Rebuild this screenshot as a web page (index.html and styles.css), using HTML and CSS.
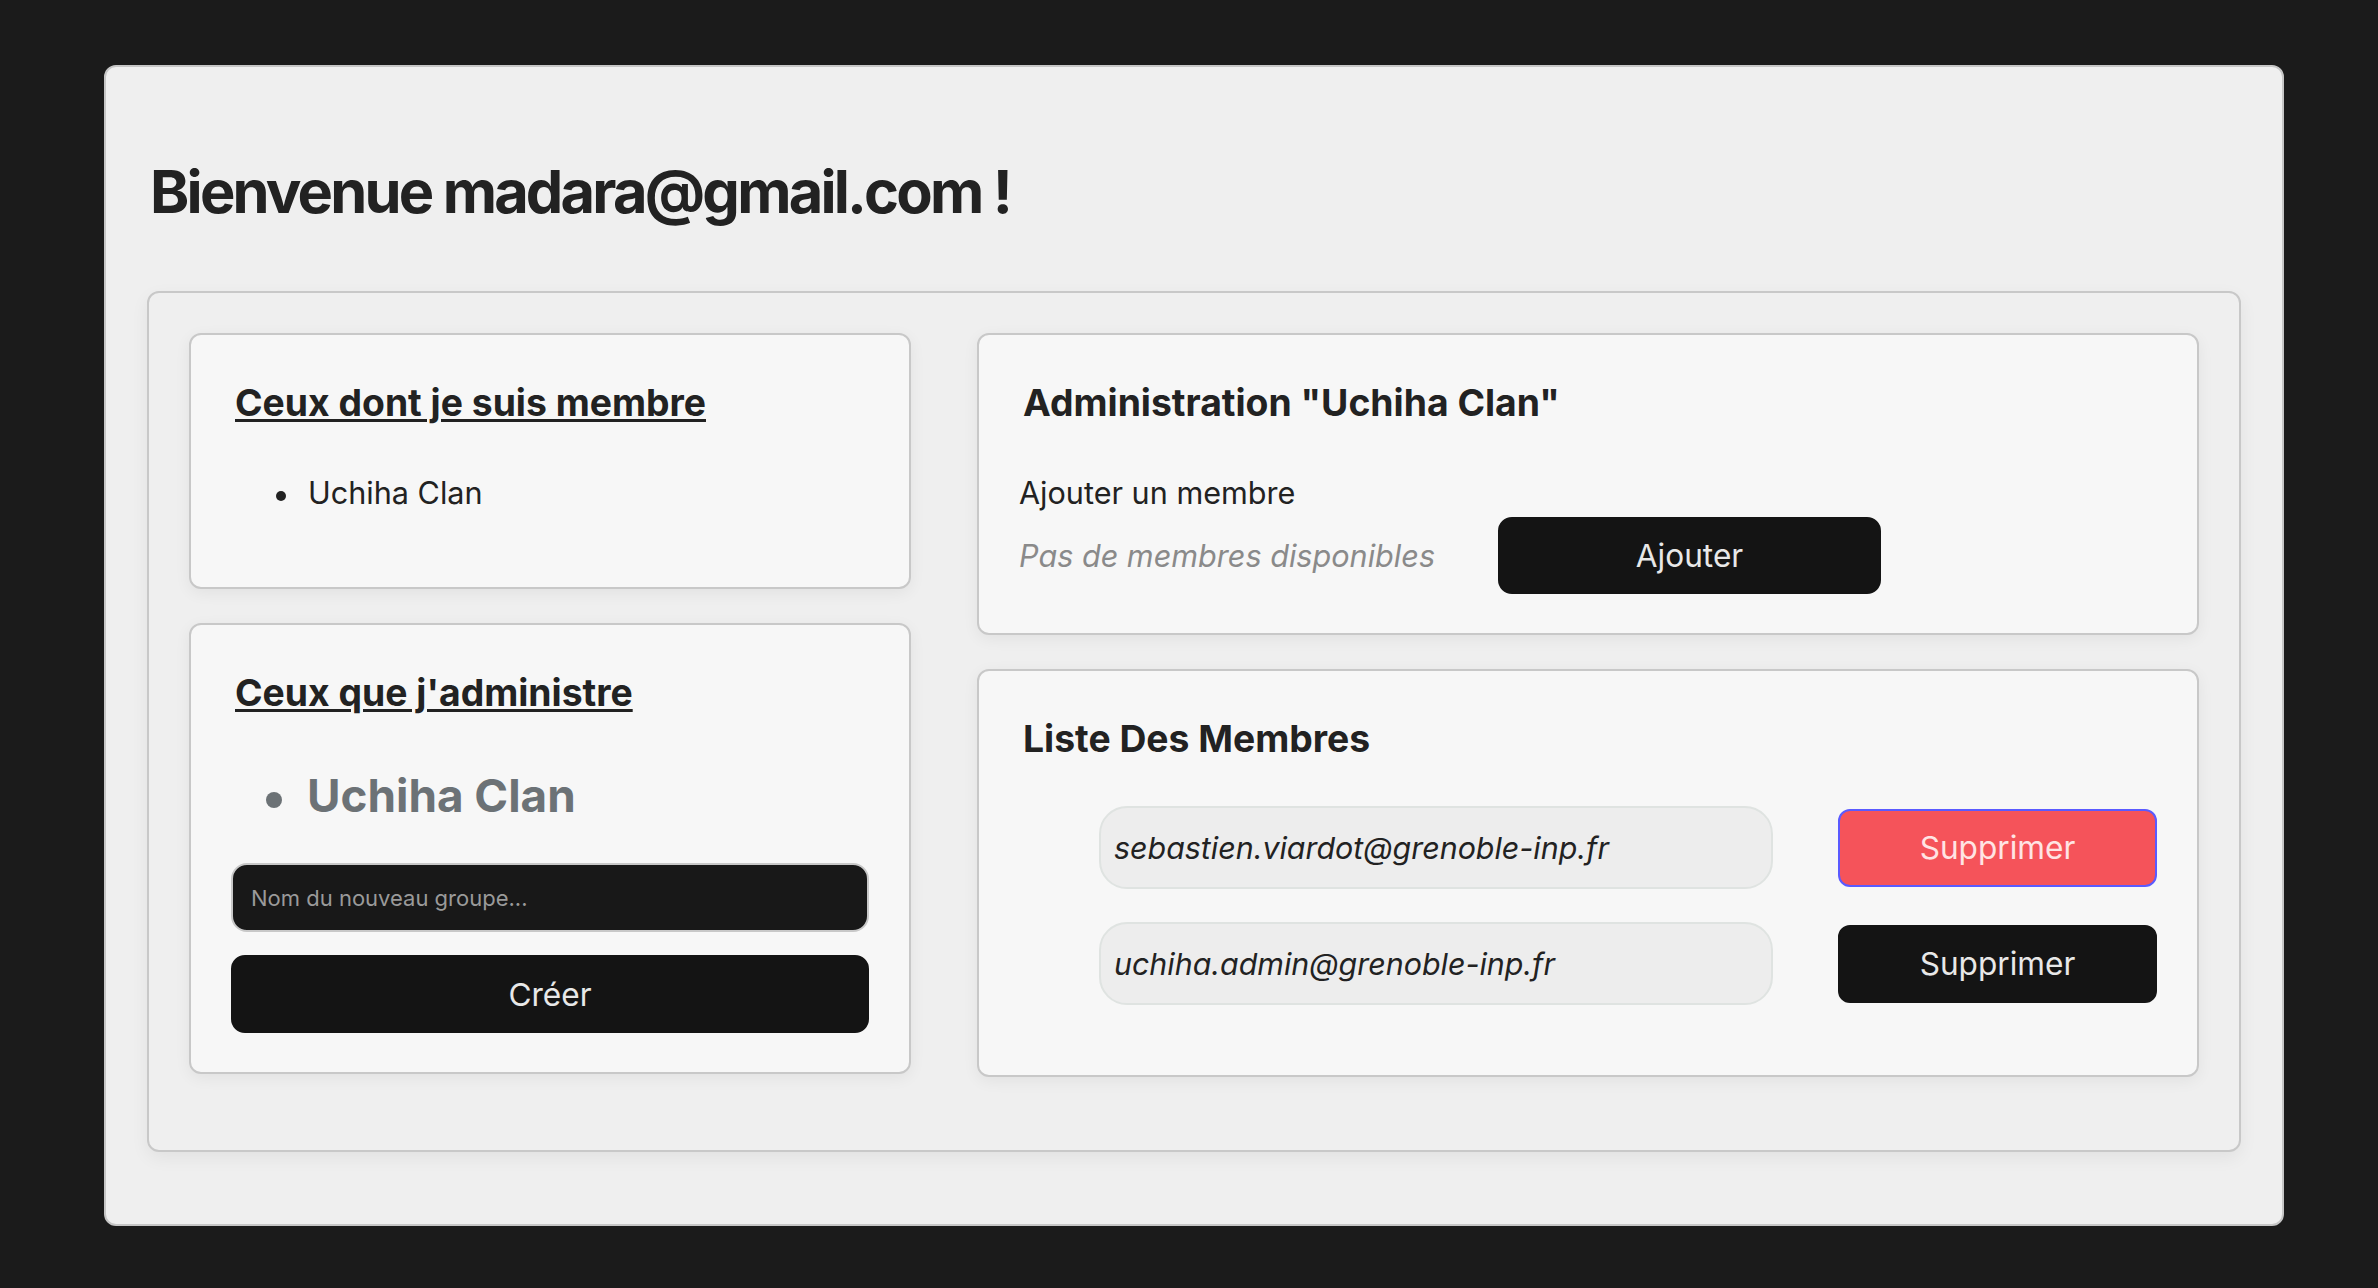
FILE: index.html
```html
<!DOCTYPE html>
<html lang="fr">
<head>
<meta charset="utf-8">
<title>Bienvenue</title>
<link rel="stylesheet" href="styles.css">
</head>
<body>
<main class="page">
  <h1 class="welcome">Bienvenue madara@gmail.com !</h1>
  <section class="board">
    <div class="col">
      <div class="card">
        <h3 class="card-title"><span class="underlined">Ceux dont je suis membre</span></h3>
        <ul class="groups">
          <li>Uchiha Clan</li>
        </ul>
      </div>
      <div class="card card-admin">
        <h3 class="card-title"><span class="underlined">Ceux que j'administre</span></h3>
        <ul class="groups groups-big">
          <li>Uchiha Clan</li>
        </ul>
        <input class="group-input" type="text" placeholder="Nom du nouveau groupe...">
        <button class="btn btn-create">Créer</button>
      </div>
    </div>
    <div class="col">
      <div class="card card-manage">
        <h3 class="card-title">Administration "Uchiha Clan"</h3>
        <p class="label">Ajouter un membre</p>
        <div class="add-row">
          <span class="empty">Pas de membres disponibles</span>
          <button class="btn btn-add">Ajouter</button>
        </div>
      </div>
      <div class="card card-members">
        <h3 class="card-title">Liste Des Membres</h3>
        <ul class="members">
          <li class="member">
            <span class="pill">sebastien.viardot@grenoble-inp.fr</span>
            <button class="btn btn-del btn-danger">Supprimer</button>
          </li>
          <li class="member">
            <span class="pill">uchiha.admin@grenoble-inp.fr</span>
            <button class="btn btn-del">Supprimer</button>
          </li>
        </ul>
      </div>
    </div>
  </section>
</main>
</body>
</html>
```

FILE: styles.css
```css
* { box-sizing: border-box; }

html, body {
  margin: 0;
  padding: 0;
  background: #1b1b1b;
}

body {
  font-family: Inter, "Noto Sans", "Liberation Sans", sans-serif;
  color: #222222;
  padding: 65px 0 0 104px;
  height: 1288px;
  overflow: hidden;
}

.page {
  width: 2180px;
  height: 1161px;
  background: #efefef;
  border: 2px solid #c6c6c6;
  border-radius: 12px;
  padding: 88px 41px 0 41px;
}

.welcome {
  margin: 0 0 64px 0;
  padding-left: 3px;
  font-size: 59.5px;
  line-height: 72px;
  font-weight: 700;
  color: #222222;
  letter-spacing: -2.8px;
}

.board {
  display: grid;
  grid-template-columns: 722px 1222px;
  column-gap: 66px;
  align-items: start;
  border: 2px solid #c8c8c8;
  border-radius: 12px;
  padding: 40px 40px 39px 40px;
  background: #efefef;
  box-shadow: 0 6px 18px rgba(0, 0, 0, 0.06);
}

.col {
  display: flex;
  flex-direction: column;
}

.card {
  background: #f7f7f7;
  border: 2px solid #c8c8c8;
  border-radius: 12px;
  padding: 46px 40px 76px 40px;
  margin-bottom: 34px;
  box-shadow: 0 4px 16px rgba(0, 0, 0, 0.06);
}

.card-title {
  margin: 0;
  padding-left: 4px;
  font-size: 37.3px;
  line-height: 44px;
  font-weight: 700;
  color: #222222;
}

.underlined {
  text-decoration: underline;
  text-decoration-thickness: 2.5px;
  text-underline-offset: 3px;
}

.groups {
  list-style: none;
  margin: 50px 0 0 0;
  padding: 0;
  font-size: 30.6px;
  line-height: 36px;
}

.groups li {
  padding-left: 45px;
}

.groups li::before {
  content: "";
  display: inline-block;
  width: 10px;
  height: 10px;
  margin-right: 22px;
  border-radius: 50%;
  background: currentColor;
  vertical-align: middle;
}

.groups-big {
  margin-top: 54px;
  font-size: 45.8px;
  line-height: 54px;
  font-weight: 700;
  color: #6c7276;
}

.groups-big li { padding-left: 35px; }

.groups-big li::before {
  width: 16px;
  height: 16px;
  margin-right: 25px;
}

.card-admin { padding-bottom: 39px; }

.group-input {
  display: block;
  width: 100%;
  height: 69px;
  margin-top: 40px;
  background: #181818;
  border: 2px solid #c8c8c8;
  border-radius: 16px;
  padding: 0 18px;
  font-family: Inter, "Noto Sans", sans-serif;
  font-size: 22px;
  color: #e0e0e0;
  outline: none;
}

.group-input::placeholder { color: #9a9a9a; }

.btn {
  font-family: Inter, "Noto Sans", sans-serif;
  font-size: 31.6px;
  background: #141414;
  color: #e8e8e8;
  border: 2px solid #141414;
  border-radius: 14px;
  cursor: pointer;
}

.btn-create {
  display: block;
  width: 100%;
  height: 78px;
  margin-top: 23px;
}

.card-manage { padding-bottom: 39px; }

.label {
  margin: 50px 0 0 0;
  font-size: 30.6px;
  line-height: 36px;
}

.add-row {
  display: flex;
  align-items: center;
  margin-top: 6px;
}

.empty {
  width: 479px;
  font-size: 30.6px;
  line-height: 36px;
  font-style: italic;
  color: #8a8a8a;
}

.btn-add {
  width: 383px;
  height: 77px;
}

.card-members { padding-bottom: 37px; }

.members {
  list-style: none;
  margin: 45px 0 0 0;
  padding: 0 0 0 80px;
}

.member {
  display: flex;
  align-items: center;
  gap: 65px;
  margin-bottom: 33px;
}

.pill {
  display: flex;
  flex-shrink: 0;
  align-items: center;
  width: 674px;
  height: 83px;
  padding-left: 13px;
  background: #ededed;
  border: 2px solid #dfe3e1;
  border-radius: 28px;
  font-size: 30.4px;
  font-style: italic;
  color: #222222;
}

.btn-del {
  flex-shrink: 0;
  width: 319px;
  height: 78px;
  border-radius: 12px;
}

.btn-danger {
  background: #f5535a;
  border-color: #5a5aff;
  color: #ffe4e4;
}
```
